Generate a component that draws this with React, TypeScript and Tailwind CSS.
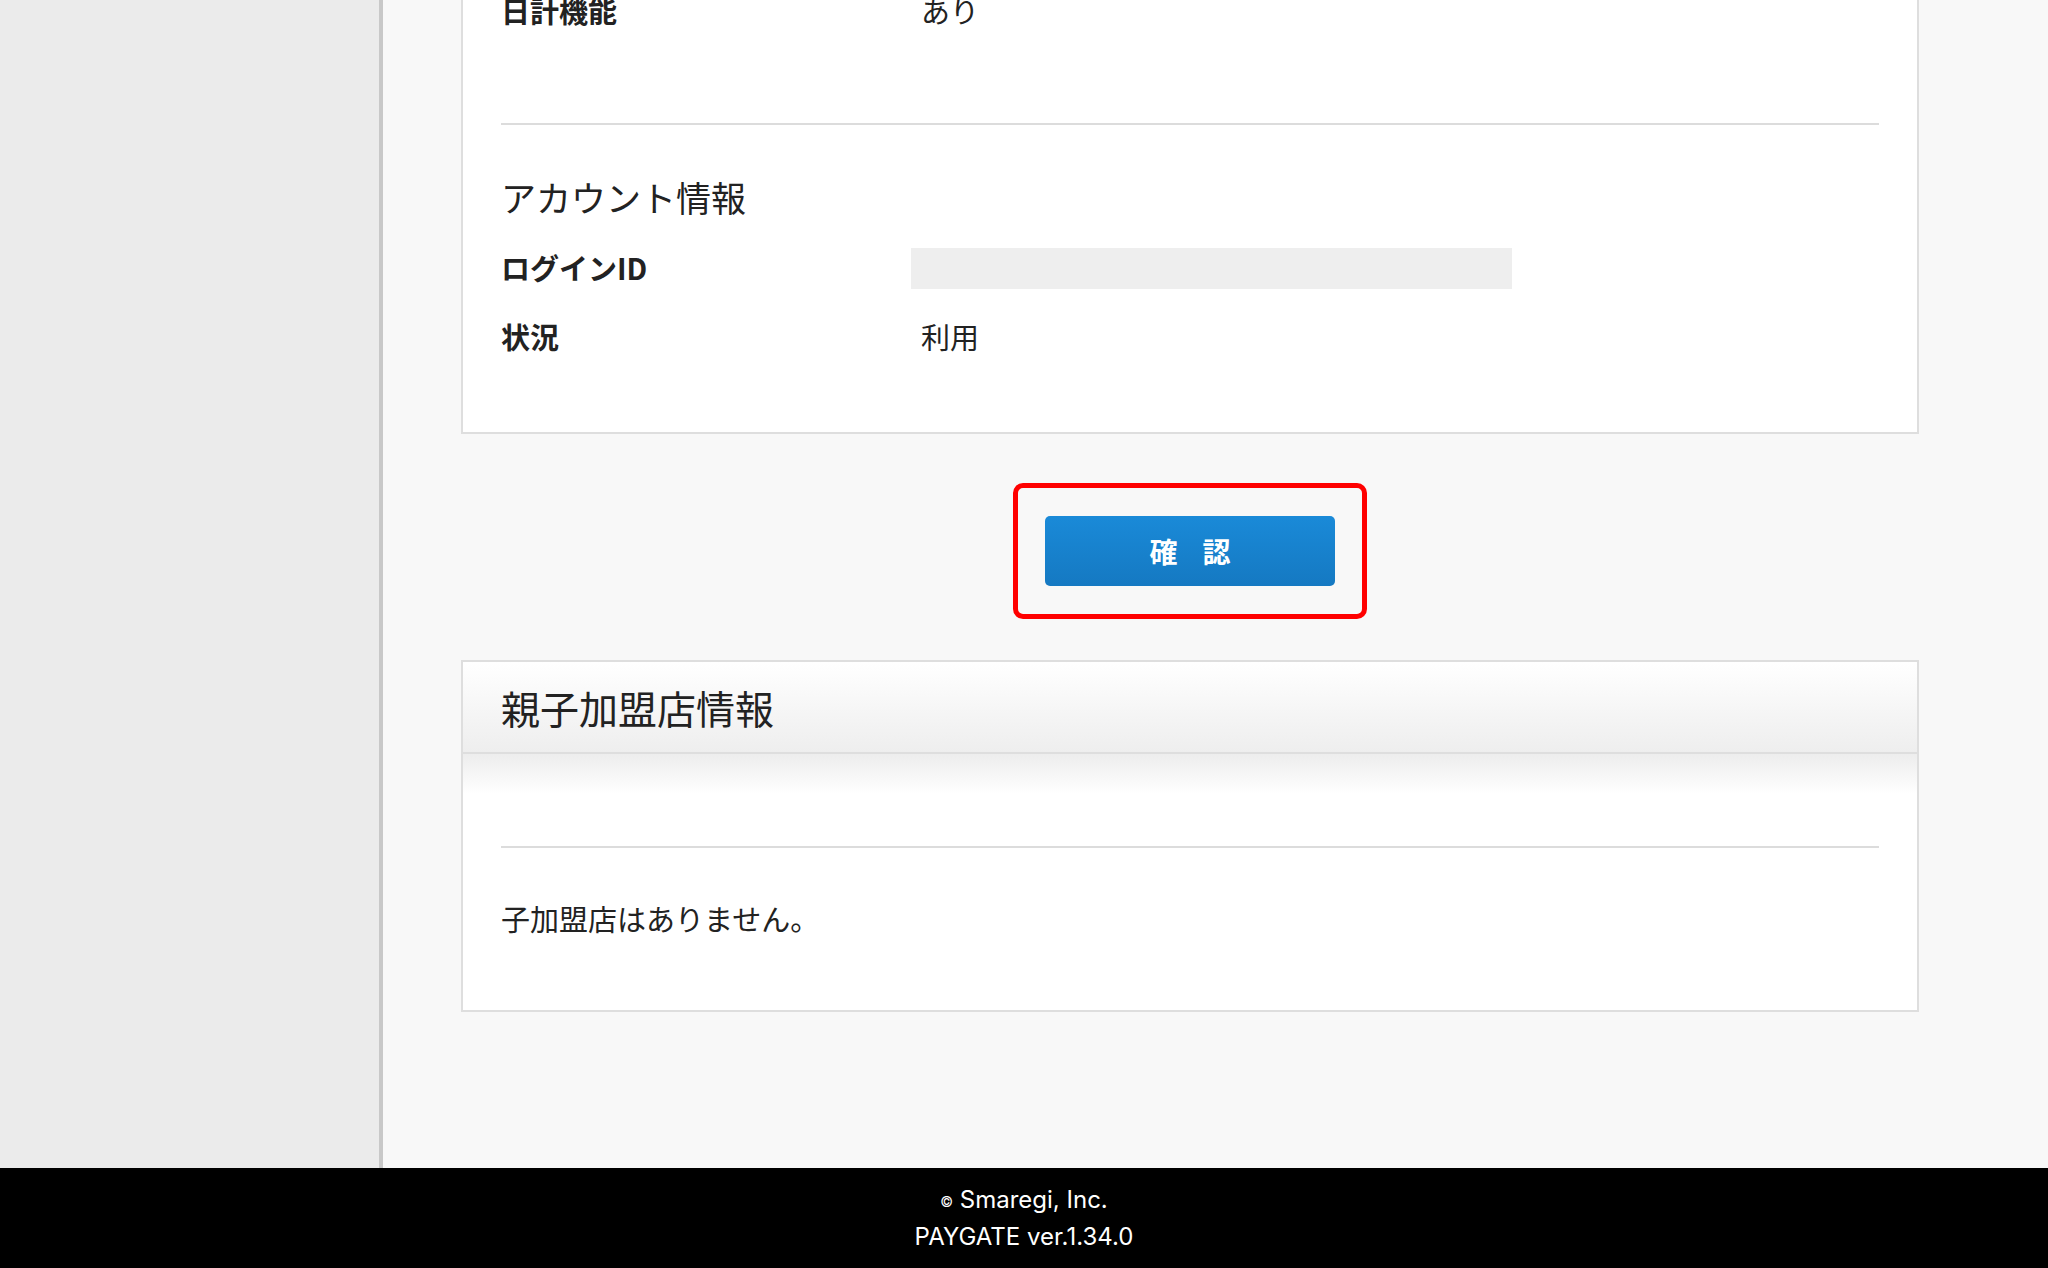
export default function App() {
  const f = { fontFamily: '"Noto Sans CJK JP", "Noto Sans", sans-serif' };
  return (
    <div className="w-[2048px] h-[1268px] flex flex-col overflow-hidden text-[#222]" style={f}>
      <div className="flex flex-1 min-h-0">
        <div className="w-[383px] bg-[#ebebeb] border-r-[4px] border-[#c8c8c8] shrink-0" />
        <div className="flex-1 bg-[#f8f8f8] pl-[78px] pr-[129px] flex flex-col">
          <div className="bg-white border-2 border-[#dedede] border-t-0 px-[38px] pb-[75px] -mt-[18px]">
            <div className="flex items-center h-[56px] text-[29px] leading-none">
              <div className="w-[420px] font-bold">日計機能</div>
              <div>あり</div>
            </div>
            <div className="h-[87px] border-b-2 border-[#dcdcdc]" />
            <div className="text-[35px] leading-none pt-[54px]">アカウント情報</div>
            <div className="flex items-center mt-[33px] h-[42px] text-[29px]">
              <div className="w-[410px] font-bold">ログインID</div>
              <div className="w-[601px] h-[41px] bg-[#eeeeee]" />
            </div>
            <div className="flex items-center mt-[28px] h-[40px] text-[29px]">
              <div className="w-[420px] font-bold">状況</div>
              <div>利用</div>
            </div>
          </div>
          <div className="flex justify-center mt-[49px]">
            <div className="w-[354px] h-[136px] border-[5px] border-[#ff0000] rounded-[10px] flex items-center justify-center">
              <div className="w-[290px] h-[70px] rounded-[5px] bg-gradient-to-b from-[#1a8ad8] to-[#1579c2] text-white font-bold text-[28px] flex items-center justify-center tracking-[0.9em] pl-[0.9em]">確認</div>
            </div>
          </div>
          <div className="mt-[41px] bg-white border-2 border-[#dedede]">
            <div className="h-[92px] bg-gradient-to-b from-white to-[#eeeeee] border-b-2 border-[#dedede] flex items-center px-[38px] text-[39px]">親子加盟店情報</div>
            <div className="px-[38px]" style={{ background: 'linear-gradient(#ededed, #fff 40px)' }}>
              <div className="h-[94px] border-b-2 border-[#dcdcdc]" />
            </div>
            <div className="px-[38px] h-[162px] pt-[56px] text-[29px] leading-none">子加盟店はありません。</div>
          </div>
        </div>
      </div>
      <div className="h-[100px] bg-black text-white flex flex-col items-center justify-center text-[24px] leading-[35px]" style={{ fontFamily: '"Inter", "Noto Sans", sans-serif' }}>
        <div><span className="text-[14px] align-middle">©</span> Smaregi, Inc.</div>
        <div>PAYGATE ver.1.34.0</div>
      </div>
    </div>
  );
}
